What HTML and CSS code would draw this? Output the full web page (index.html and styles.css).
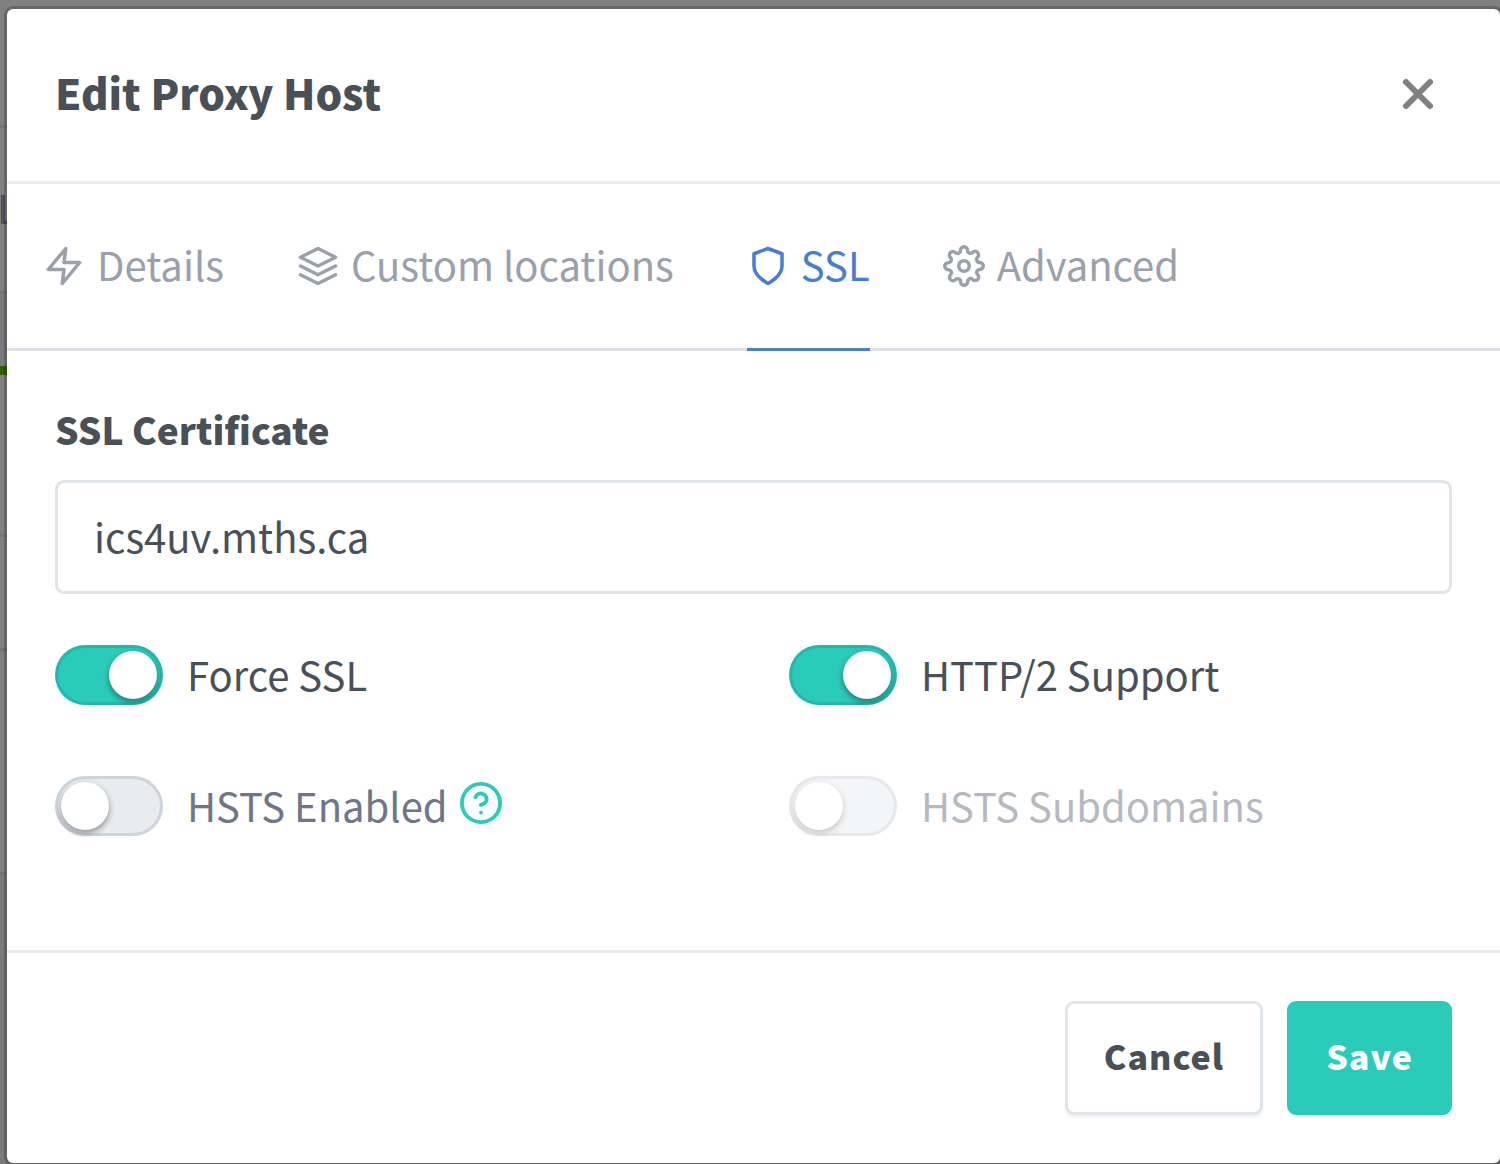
FILE: index.html
```html
<!DOCTYPE html>
<html lang="en">
<head>
<meta charset="utf-8">
<meta name="viewport" content="width=device-width, initial-scale=1">
<title>Edit Proxy Host</title>
<link rel="stylesheet" href="styles.css">
</head>
<body>
<div class="page" aria-hidden="true">
  <div class="page-bar"></div>
  <div class="page-nav">L</div>
  <div class="page-gap"></div>
  <div class="page-card"></div>
  <div class="page-table-head"></div>
  <div class="page-table-body"></div>
  <div class="page-footer"></div>
</div>

<div class="modal" role="dialog" aria-labelledby="modal-title">
  <form class="modal-content">
    <header class="modal-header">
      <h1 class="modal-title" id="modal-title">Edit Proxy Host</h1>
      <button class="close" type="button" aria-label="Close">
        <svg class="close-icon" viewBox="0 0 24 24"><path d="M6 6l12 12M18 6L6 18"/></svg>
      </button>
    </header>

    <nav class="tabs">
      <a class="tab" href="#details">
        <svg class="icon" viewBox="0 0 24 24"><path d="M13 2L3 14h9l-1 8 10-12h-9z"/></svg>
        <span class="tab-text">Details</span>
      </a>
      <a class="tab" href="#locations">
        <svg class="icon" viewBox="0 0 24 24"><path d="M12 2L2 7l10 5 10-5zM2 17l10 5 10-5M2 12l10 5 10-5"/></svg>
        <span class="tab-text">Custom locations</span>
      </a>
      <a class="tab tab-active" href="#ssl" aria-current="page">
        <svg class="icon" viewBox="0 0 24 24"><path d="M12 22s8-4 8-10V5l-8-3-8 3v7c0 6 8 10 8 10z"/></svg>
        <span class="tab-text">SSL</span>
      </a>
      <a class="tab" href="#advanced">
        <svg class="icon" viewBox="0 0 24 24"><circle cx="12" cy="12" r="3"/><path d="M19.4 15a1.65 1.65 0 0 0 .33 1.82l.06.06a2 2 0 0 1 0 2.83 2 2 0 0 1-2.83 0l-.06-.06a1.65 1.65 0 0 0-1.82-.33 1.65 1.65 0 0 0-1 1.51V21a2 2 0 0 1-2 2 2 2 0 0 1-2-2v-.09A1.65 1.65 0 0 0 9 19.4a1.65 1.65 0 0 0-1.82.33l-.06.06a2 2 0 0 1-2.83 0 2 2 0 0 1 0-2.83l.06-.06a1.65 1.65 0 0 0 .33-1.82 1.65 1.65 0 0 0-1.51-1H3a2 2 0 0 1-2-2 2 2 0 0 1 2-2h.09A1.65 1.65 0 0 0 4.6 9a1.65 1.65 0 0 0-.33-1.82l-.06-.06a2 2 0 0 1 0-2.83 2 2 0 0 1 2.83 0l.06.06a1.65 1.65 0 0 0 1.82.33H9a1.65 1.65 0 0 0 1-1.51V3a2 2 0 0 1 2-2 2 2 0 0 1 2 2v.09a1.65 1.65 0 0 0 1 1.51 1.65 1.65 0 0 0 1.82-.33l.06-.06a2 2 0 0 1 2.83 0 2 2 0 0 1 0 2.83l-.06.06a1.65 1.65 0 0 0-.33 1.82V9a1.65 1.65 0 0 0 1.51 1H21a2 2 0 0 1 2 2 2 2 0 0 1-2 2h-.09a1.65 1.65 0 0 0-1.51 1z"/></svg>
        <span class="tab-text">Advanced</span>
      </a>
    </nav>

    <div class="modal-body">
      <label class="form-label" for="certificate">SSL Certificate</label>
      <select class="form-select" id="certificate">
        <option selected>ics4uv.mths.ca</option>
      </select>

      <div class="switches">
        <label class="switch">
          <input class="switch-input" type="checkbox" checked>
          <span class="switch-text">Force SSL</span>
        </label>
        <label class="switch">
          <input class="switch-input" type="checkbox" checked>
          <span class="switch-text">HTTP/2 Support</span>
        </label>
        <div class="switch-group">
          <label class="switch">
            <input class="switch-input" type="checkbox">
            <span class="switch-text">HSTS Enabled</span>
          </label>
          <a class="help" href="#hsts" aria-label="About HSTS">
            <svg class="icon" viewBox="1 1 22 22"><circle cx="12" cy="12" r="10"/><path d="M9.09 9a3 3 0 0 1 5.83 1c0 2-3 3-3 3M12 17h.01"/></svg>
          </a>
        </div>
        <label class="switch">
          <input class="switch-input" type="checkbox" disabled>
          <span class="switch-text">HSTS Subdomains</span>
        </label>
      </div>
    </div>

    <footer class="modal-footer">
      <button class="btn btn-secondary" type="button">Cancel</button>
      <button class="btn btn-primary" type="submit">Save</button>
    </footer>
  </form>
</div>
</body>
</html>
```

FILE: styles.css
```css
* {
  box-sizing: border-box;
}

body {
  margin: 0;
  display: grid;
  overflow: hidden;
  background: #808080;
  color: #495057;
  font: 40px/60px "Noto Sans CJK SC", "Open Sans", sans-serif;
}

/* Dimmed page behind the dialog */
.page,
.modal {
  grid-area: 1 / 1;
}

.page-bar {
  height: 128px;
  border-bottom: 3px solid #74767b;
}

.page-nav {
  height: 166px;
  padding-top: 49px;
  border-bottom: 3px solid #74767b;
  color: #4d5058;
  text-indent: -3px;
}

.page-gap {
  height: 72px;
  background: #7a7b7d;
}

.page-card {
  height: 171px;
  border-top: 9px solid #2f5f00;
  border-bottom: 3px solid #74767b;
}

.page-table-head {
  height: 114px;
  border-bottom: 3px solid #717171;
}

.page-table-body {
  height: 224px;
  border-bottom: 3px solid #717378;
}

.page-footer {
  height: 289px;
  background: #7a7b7d;
}

/* Dialog */
.modal {
  position: relative;
  margin: 6px -3px 0 4px;
}

.modal-content {
  background: #fff;
  background-clip: padding-box;
  border: 3px solid rgba(0, 0, 0, 0.2);
  border-radius: 9px;
}

.modal-header {
  display: flex;
  align-items: center;
  justify-content: space-between;
  padding: 47px 48px 49px;
  border-bottom: 3px solid #e9ecef;
}

.modal-title {
  margin: 0;
  padding-bottom: 4px;
  font-size: 42px;
  line-height: 72px;
  font-weight: 900;
}

.close {
  display: flex;
  margin-right: 10px;
  padding: 0;
  border: 0;
  background: none;
  color: #808080;
}

.close-icon {
  width: 48px;
  height: 48px;
  fill: none;
  stroke: currentColor;
  stroke-width: 3;
  stroke-linecap: round;
}

.icon {
  width: 42px;
  height: 42px;
  flex: none;
  fill: none;
  stroke: currentColor;
  stroke-width: 2;
  stroke-linecap: round;
  stroke-linejoin: round;
}

.tabs {
  display: flex;
  gap: 73px;
  padding: 0 36px;
  border-bottom: 3px solid #dee2e6;
}

.tab {
  display: flex;
  align-items: center;
  gap: 12px;
  margin-bottom: -3px;
  padding: 50px 0;
  border-bottom: 3px solid transparent;
  color: #9aa0ac;
  text-decoration: none;
}

.tab-text {
  padding-bottom: 4px;
}

.tab-active {
  border-color: #467fcf;
  color: #467fcf;
}

.modal-body {
  padding: 48px 48px 114px;
}

.form-label {
  display: block;
  margin-bottom: 21px;
  font-size: 37px;
  line-height: 60px;
  font-weight: 900;
}

.form-select {
  display: block;
  appearance: none;
  width: 100%;
  height: 114px;
  margin-bottom: 51px;
  padding: 0 36px 2px;
  border: 3px solid #e0e5ec;
  border-radius: 9px;
  background: #fff;
  color: inherit;
  font: inherit;
}

.switches {
  display: grid;
  grid-template-columns: 1fr 1fr;
  gap: 71px;
}

.switch,
.switch-group {
  display: flex;
  align-items: center;
  height: 60px;
}

.switch {
  gap: 24px;
}

.switch-group {
  gap: 12px;
}

.switch-input {
  appearance: none;
  display: flex;
  flex: none;
  width: 108px;
  height: 60px;
  margin: 0;
  padding: 3px;
  border: 3px solid rgba(0, 40, 100, 0.12);
  border-radius: 30px;
  background: #e9ecef;
}

.switch-input::before {
  content: "";
  width: 48px;
  height: 48px;
  border-radius: 50%;
  background: #fff;
  box-shadow: 0 3px 6px rgba(0, 0, 0, 0.4);
}

.switch-input:checked {
  justify-content: flex-end;
  background-color: #2bcbba;
}

.switch-input:disabled {
  opacity: 0.5;
}

.switch-text {
  padding-bottom: 3px;
  color: #6e7687;
}

.switch-input:checked + .switch-text {
  color: #495057;
}

.switch-input:disabled + .switch-text {
  opacity: 0.5;
}

.help {
  display: flex;
  padding-bottom: 7px;
  color: #2bcbba;
}

.modal-footer {
  display: flex;
  justify-content: flex-end;
  gap: 24px;
  padding: 48px;
  border-top: 3px solid #e9ecef;
}

.btn {
  height: 114px;
  padding: 0 36px 4px;
  border: 3px solid;
  border-radius: 9px;
  font: inherit;
  font-size: 34px;
  font-weight: 900;
  letter-spacing: 1px;
}

.btn-secondary {
  border-color: #e0e5ec;
  background: #fff;
  color: #495057;
  box-shadow: 0 3px 3px rgba(0, 0, 0, 0.05);
}

.btn-primary {
  border-color: #2bcbba;
  background: #2bcbba;
  color: #fff;
}
```
